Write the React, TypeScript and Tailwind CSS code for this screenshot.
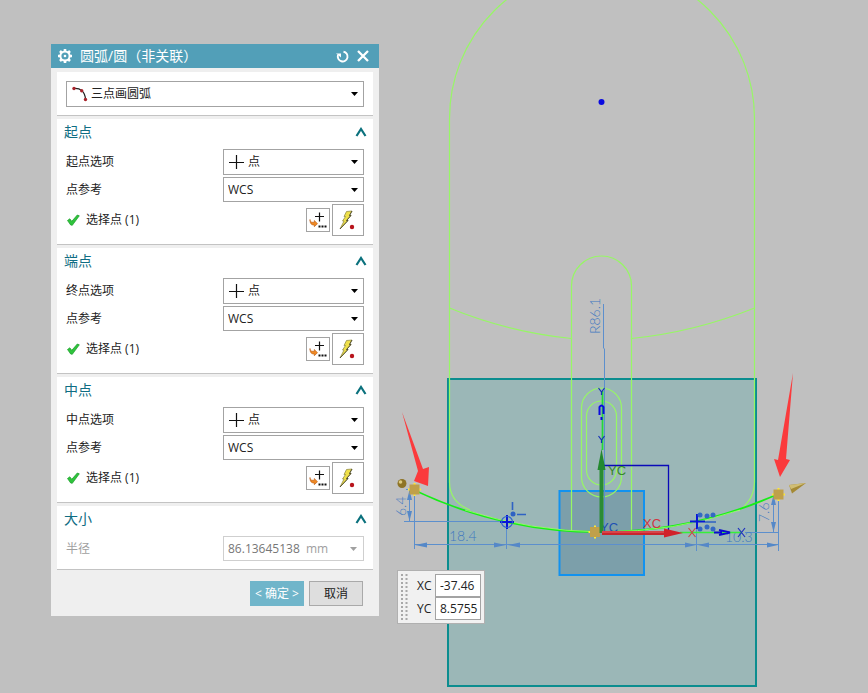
import type { ReactNode } from "react"

const Caret = ({ className = "text-black" }) => (
  <svg className={`pointer-events-none absolute right-1.5 top-1/2 -translate-y-1/2 ${className}`} width="7" height="5" viewBox="0 0 7 5">
    <path d="M0 0.500h7L3.500 4.500z" fill="currentColor" />
  </svg>
)

const Dropdown = ({ id, label, value, icon, className = "" }: { id: string; label?: string; value: string; icon?: ReactNode; className?: string }) => (
  <div className={`relative ${className}`}>
    {icon && <span className="pointer-events-none absolute left-1.5 top-1/2 -translate-y-1/2">{icon}</span>}
    <select
      id={id}
      aria-label={label}
      className={`block h-full w-full appearance-none border border-[#a3a3a3] bg-white text-xs text-[#222] ${icon ? "pl-6" : "pl-1"}`}
    >
      <option>{value}</option>
    </select>
    <Caret />
  </div>
)

const PlusIcon = () => (
  <svg className="block" width="15" height="14" viewBox="0 0 15 14">
    <path d="M7.5 0v14M0 7.5h15" stroke="#111" strokeWidth="1.2" />
  </svg>
)

const ArcIcon = () => (
  <svg className="block" width="17" height="16" viewBox="0 0 17 16">
    <path d="M2 2.500C8 2 13 5 13.500 13.500" fill="none" stroke="#222" strokeWidth="1.3" />
    <circle cx="2" cy="2.500" r="1.700" fill="#a8232a" />
    <circle cx="9.700" cy="4.800" r="1.700" fill="#a8232a" />
    <circle cx="13.500" cy="13.500" r="1.700" fill="#a8232a" />
  </svg>
)

const CheckIcon = () => (
  <svg className="block" width="14" height="12" viewBox="0 0 14 12">
    <path d="M1.500 6.500 3.800 4.800 5.800 7.300 11.300 1 13.300 1.800 6.300 11.300 4.700 11z" fill="#2fc43c" stroke="#159a25" strokeWidth="0.7" />
  </svg>
)

const PointDialogIcon = () => (
  <svg className="block" width="22" height="22" viewBox="0 0 22 22">
    <path d="M12.500 3.500v9M8 7.500h9" stroke="#111" strokeWidth="1.200" />
    <path d="M3 10.500c0 1.700.800 2.500 2 2.700 1 .200 1.700.100 2.300 0v-1.700l3.200 3.200-3.200 3v-1.700C4.500 16.200 2.800 14.500 3 10.500z" fill="#f08a24" stroke="#b8560c" strokeWidth="0.600" />
    <path d="M11.500 16.500h2v2h-2zM14.500 16.500h2v2h-2zM17.500 16.500h2v2h-2z" fill="#111" />
  </svg>
)

const BoltIcon = () => (
  <svg className="block" width="30" height="30" viewBox="0 0 30 30">
    <path d="M13.500 6.500 19 6l-2.500 4.500 1.500 0-4.500 5h1.500L7 24l4-8H9.500l3-4.500H11z" fill="#efe04a" stroke="#8a8440" strokeWidth="0.700" />
    <path d="M19 6 16.500 10.500H18l-4.500 5h1.500L7 24" fill="none" stroke="#4c4930" strokeWidth="0.900" />
    <circle cx="19" cy="22" r="2.200" fill="#b8141c" />
  </svg>
)

const Section = ({ title, children }: { title: string; children: ReactNode }) => (
  <section className="border-b border-[#c3c3c3] bg-white px-[9px] pb-2">
    <div className="-mx-0.5 mb-1 flex h-[26px] items-center justify-between">
      <h2 className="text-sm text-[#0f6d83]">{title}</h2>
      <button type="button" aria-label={title} className="-mr-px">
        <svg className="block" width="12" height="10" viewBox="0 0 12 10">
          <path d="M1.500 9 6 2l4.500 7" fill="none" stroke="#0b717d" strokeWidth="2.200" />
        </svg>
      </button>
    </div>
    {children}
  </section>
)

const PointSection = ({ id, title, option }: { id: string; title: string; option: string }) => (
  <Section title={title}>
    <div className="flex flex-col gap-0.5">
      <div className="flex h-[26px] items-center justify-between">
        <label htmlFor={`${id}-option`}>{option}</label>
        <Dropdown id={`${id}-option`} value="点" icon={<PlusIcon />} className="h-full w-[141px]" />
      </div>
      <div className="flex h-[25px] items-center justify-between">
        <label htmlFor={`${id}-ref`}>点参考</label>
        <Dropdown id={`${id}-ref`} value="WCS" className="h-full w-[141px]" />
      </div>
      <div className="flex h-8 items-center">
        <CheckIcon />
        <span className="ml-1.5 flex-1">选择点 (1)</span>
        <button type="button" aria-label="点" className="mr-0.5 flex size-6 items-center justify-center border border-[#a3a3a3] bg-white">
          <PointDialogIcon />
        </button>
        <button type="button" aria-label="点" className="flex size-8 items-center justify-center border border-[#a3a3a3] bg-white">
          <BoltIcon />
        </button>
      </div>
    </div>
  </Section>
)

const Handle = ({ x, y }: { x: number; y: number }) => (
  <g>
    <path d={`M${x} ${y - 6.5}v13M${x - 6.5} ${y}h13`} stroke="#ffe833" strokeWidth="2" />
    <rect x={x - 5} y={y - 5} width="10" height="10" fill="#bfa04a" />
  </g>
)

const dimArrows = [
  "M415 545l12-2.500v5z",
  "M506 545l-12-2.500v5z",
  "M508 545l12-2.500v5z",
  "M696 545l-11-2.500v5z",
  "M698 545l11-2.500v5z",
  "M778 545l-11-2.500v5z",
  "M409.500 490l-2.500 10h5z",
  "M409.500 521l-2.500-10h5z",
  "M773.500 495l-2.500 10h5z",
  "M773.500 532l-2.500-10h5z",
]

const dots = [[700, 515], [707, 516], [713, 515], [700, 529], [707, 527], [713, 529]]

const Drawing = () => (
  <svg className="absolute left-0 top-0 block" width="868" height="693" viewBox="0 0 868 693">
    <rect x="448" y="379" width="308" height="307" fill="#9bb7b7" stroke="#0b8d8f" strokeWidth="2" />
    <rect x="559.500" y="491" width="84.500" height="84" fill="#7c9faa" stroke="#1292ef" strokeWidth="2" />

    {/* sketch outline */}
    <g fill="none" stroke="#97f765" strokeWidth="1.200">
      <path d="M470 510Q449.500 502 449.500 482V118.500a152.500 152.500 0 0 1 305 0V482Q754 501 738 511" />
      <path d="M449.500 308Q508 332 571.500 338.500M631.500 338.500Q695 332 754.500 308" />
      <path d="M571.500 531V286a30 30 0 0 1 60 0V531" />
      <rect x="581.500" y="388" width="40" height="109" rx="20" />
      <rect x="586.500" y="401" width="30" height="84" rx="15" />
    </g>
    <circle cx="601.500" cy="102" r="3" fill="#0a0ae0" />

    {/* dimensions */}
    <g fill="none" stroke="#5c8fcd" strokeWidth="1">
      <path d="M414.500 495V549M506.500 528V549M404 521.500H500M406 489.500H413M409.500 490V522M414 544.500H778M696.500 528V551M778.500 500V551M773.500 494V533M745 532.500H778M603.500 304V348l1 1V531" />
    </g>
    {dimArrows.map((d) => (
      <path key={d} d={d} fill="#5588c8" />
    ))}
    <g className="font-['Lato'] text-[14px] font-light" fill="#3f78c0">
      <text x="449" y="541">18.4</text>
      <text x="725" y="542">10.3</text>
      <text transform="translate(406 516) rotate(-90)">6.4</text>
      <text transform="translate(769 522) rotate(-90)">7.6</text>
      <text transform="translate(600 334) rotate(-90)">R86.1</text>
    </g>

    <path d="M602 465.500H668.500V531" fill="none" stroke="#0a0ab8" strokeWidth="1.300" />
    <path d="M414 490A434 434 0 0 0 601 532A434 434 0 0 0 778 494" fill="none" stroke="#16ee16" strokeWidth="1.800" />
    <path d="M465 510Q530 531 601 532Q675 532 740 510" fill="none" stroke="#b6ff7c" strokeWidth="0.700" />

    {/* datum axes */}
    <path d="M602.500 391V450" stroke="#22d83a" strokeWidth="1.700" />
    <path d="M598.500 388l3 4 3-4M601.500 392v3M598.500 436l3 4 3-4M601.500 440v3" fill="none" stroke="#1430b8" strokeWidth="1.200" />
    <path d="M599.500 415v-8q2-3 4 0v7M601.500 417v3" fill="none" stroke="#0a0ae0" strokeWidth="2" />
    <path d="M680 532.500H742" stroke="#35f03a" strokeWidth="1.300" />
    <path d="M714 532.500H722M719 530l11 2.500-11 2.500" fill="none" stroke="#0a0ad0" strokeWidth="1.800" />
    <path d="M738 528l7 9M745 528l-7 9" stroke="#1e2fc0" strokeWidth="1.200" />
    <path d="M688.500 528l7 9M695.500 528l-7 9" stroke="#c84848" strokeWidth="1.200" />
    <Handle x={595} y={532} />
    <g className="font-['Liberation_Sans'] text-[13px]">
      <text x="600" y="532" fill="#2050b4">YC</text>
      <text x="608" y="475" fill="#36872d">YC</text>
      <text x="643" y="528" fill="#d23440">XC</text>
    </g>
    <path d="M601.500 468V533" stroke="#2a8c34" strokeWidth="4" />
    <path d="M601.500 449L597.500 470h8z" fill="#23892e" />
    <path d="M602 533H665" stroke="#c9252c" strokeWidth="4" />
    <path d="M602 532H665" stroke="#e46469" strokeWidth="1" />
    <path d="M683 533L664 528.500v9z" fill="#d1222a" />

    {/* constraint markers */}
    <g fill="none" stroke="#0716d8" strokeWidth="2">
      <path d="M500 522H514M507 515V529M690 521.500H705M697 514V529" />
      <circle cx="507" cy="522" r="5.500" stroke="#2b5fd0" strokeWidth="1.200" />
    </g>
    <path d="M512.500 502V510M517 514.500H526M705 522H716" stroke="#2f62c4" strokeWidth="1.600" />
    <circle cx="513" cy="514" r="2.500" fill="#2f62c4" />
    {dots.map(([x, y]) => (
      <circle key={`${x}-${y}`} cx={x} cy={y} r="2.500" fill="#3468c4" />
    ))}

    <Handle x={414.5} y={489.5} />
    <Handle x={778.5} y={494.5} />
    <circle cx="402" cy="483.500" r="4.500" fill="#8e7426" />
    <circle cx="400.500" cy="482" r="1.800" fill="#dccb80" />
    <path d="M789 485L806 483 792 493.500z" fill="#a58a35" />
    <path d="M789 485L806 483 791 489z" fill="#d0bd74" />

    <path d="M402 412L423 469 429 467 428 486 414 481 418 471z" fill="#fb3a3c" />
    <path d="M793 373L786 459 790 460 780 477 774 459 778 460z" fill="#fb3a3c" />
  </svg>
)

const CoordField = ({ id, label, value }: { id: string; label: string; value: string }) => (
  <div className="flex items-center">
    <label htmlFor={id} className="w-[18px]">{label}</label>
    <input id={id} defaultValue={value} className="h-[23px] w-[46px] border border-[#a3a3a3] bg-white pl-1 text-xs" />
  </div>
)

const App = () => {
  return (
    <main className="relative min-h-screen overflow-hidden bg-[#c0c0c0] pl-[51px] pt-11 font-['Open_Sans','Noto_Sans_CJK_SC',sans-serif] text-xs text-[#222]">
      <Drawing />

      <div className="relative w-[328px] bg-[#efefef]">
        <header className="flex h-6 items-center bg-[#529fb8] pl-1.5 pr-2.5 text-white">
          <svg className="block" width="16" height="16" viewBox="0 0 16 16" fill="none" stroke="white">
            <circle cx="8" cy="8" r="4.600" strokeWidth="2" />
            <circle cx="8" cy="8" r="1.300" fill="white" stroke="none" />
            <path d="M8 1v2.500M8 12.500V15M1 8h2.500M12.500 8H15M3 3l1.800 1.800M11.200 11.200 13 13M3 13l1.800-1.800M11.200 4.800 13 3" strokeWidth="2.600" />
          </svg>
          <h1 className="ml-[7px] flex-1 text-sm">圆弧/圆（非关联）</h1>
          <button type="button" aria-label="重置" className="mr-2">
            <svg className="block" width="13" height="13" viewBox="0 0 13 13" fill="none" stroke="white">
              <path d="M7.500 1.700A4.900 4.900 0 1 1 2 5" strokeWidth="1.900" />
              <path d="M0 3.500h5v4z" fill="white" stroke="none" />
            </svg>
          </button>
          <button type="button" aria-label="关闭">
            <svg className="block" width="12" height="12" viewBox="0 0 12 12">
              <path d="M1 1l10 10M11 1L1 11" stroke="white" strokeWidth="2.300" />
            </svg>
          </button>
        </header>

        <div className="flex flex-col gap-[3px] px-1.5 pt-1">
          <section className="border-b border-[#c3c3c3] bg-white px-[9px] pb-2 pt-[9px]">
            <Dropdown id="arc-type" label="类型" value="三点画圆弧" icon={<ArcIcon />} className="h-[26px]" />
          </section>

          <PointSection id="start" title="起点" option="起点选项" />
          <PointSection id="end" title="端点" option="终点选项" />
          <PointSection id="mid" title="中点" option="中点选项" />

          <Section title="大小">
            <div className="flex h-[25px] items-center justify-between text-[#a0a0a0]">
              <label htmlFor="radius">半径</label>
              <div className="relative flex h-full w-[141px] items-center border border-[#cfcfcf] pl-1">
                <input id="radius" disabled defaultValue="86.13645138" className="w-[78px] bg-transparent text-xs text-[#777]" />
                <span>mm</span>
                <Caret className="text-[#a0a0a0]" />
              </div>
            </div>
          </Section>
        </div>

        <footer className="flex justify-end gap-[5px] pb-2.5 pr-4 pt-[11px]">
          <button type="button" className="h-[25px] w-[54px] bg-[#70b5ca] text-white">&lt; 确定 &gt;</button>
          <button type="button" className="h-[25px] w-[54px] border border-[#a9a9a9] bg-[#dedede]">取消</button>
        </footer>
      </div>

      <div className="absolute left-[397px] top-[570px] flex border border-[#b0b0b0] bg-[#f1f1f1] py-[3px] pl-[3px] pr-[3px]">
        <svg className="mr-[9px] block" width="7" height="46" viewBox="0 0 7 46">
          <path d="M1 0V46M5.500 0V46" stroke="#a8a8a8" strokeWidth="2" strokeDasharray="2 2" />
        </svg>
        <div>
          <CoordField id="xc" label="XC" value="-37.46" />
          <CoordField id="yc" label="YC" value="8.5755" />
        </div>
      </div>
    </main>
  )
}

export default App
